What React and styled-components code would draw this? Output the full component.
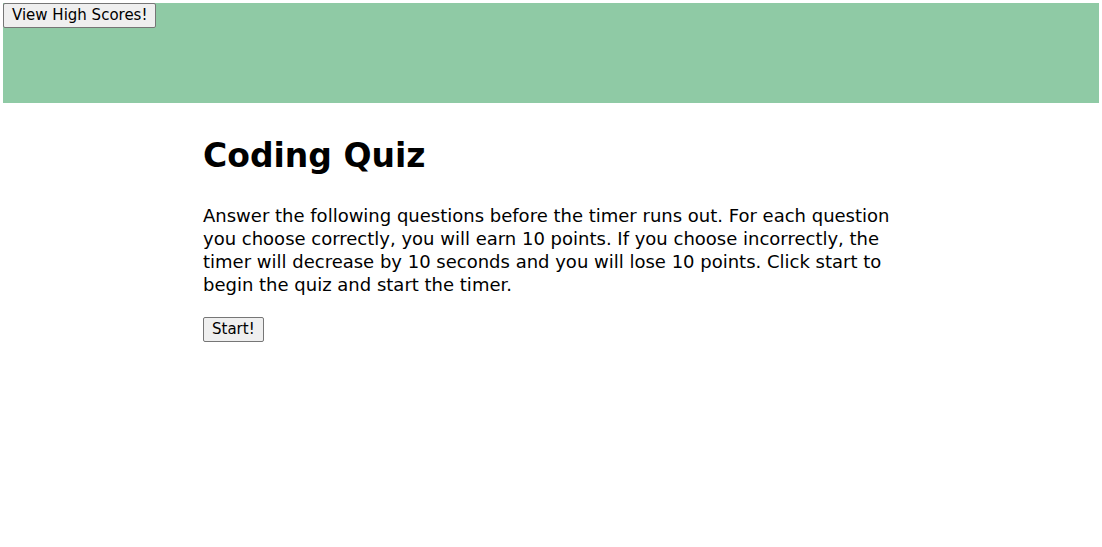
import React from 'react';
import styled, { createGlobalStyle } from 'styled-components';

const GlobalStyle = createGlobalStyle`
  body {
    margin: 3px;
    font-family: "DejaVu Sans", "Open Sans", sans-serif;
    background: #ffffff;
    color: #000000;
  }
`;

const Header = styled.header`
  background-color: #8fcaa5;
  height: 100px;
`;

const NativeButton = styled.button`
  font-family: "DejaVu Sans", "Open Sans", sans-serif;
  font-size: 15px;
  color: #000;
  background: #efefef;
  border: 1px solid #767676;
  border-radius: 2px;
  padding: 1px 8px;
  height: 25px;
  line-height: 1;
  cursor: pointer;
  margin: 0;
`;

const Main = styled.main`
  margin-left: 200px;
  width: 700px;
  display: flex;
  flex-direction: column;
  align-items: flex-start;
`;

const Title = styled.h1`
  font-size: 33px;
  font-weight: 700;
  margin: 33px 0 28px;
  line-height: 1.2;
`;

const Intro = styled.p`
  font-size: 18px;
  line-height: 23px;
  margin: 0 0 21px;
`;

export default class App extends React.Component {
    render() {
        return (
            <>
                <GlobalStyle />
                <Header>
                    <NativeButton>View High Scores!</NativeButton>
                </Header>
                <Main>
                    <Title>Coding Quiz</Title>
                    <Intro>
                        Answer the following questions before the timer runs out. For each question
                        you choose correctly, you will earn 10 points. If you choose incorrectly, the
                        timer will decrease by 10 seconds and you will lose 10 points. Click start to
                        begin the quiz and start the timer.
                    </Intro>
                    <NativeButton>Start!</NativeButton>
                </Main>
            </>
        )
    }
};
